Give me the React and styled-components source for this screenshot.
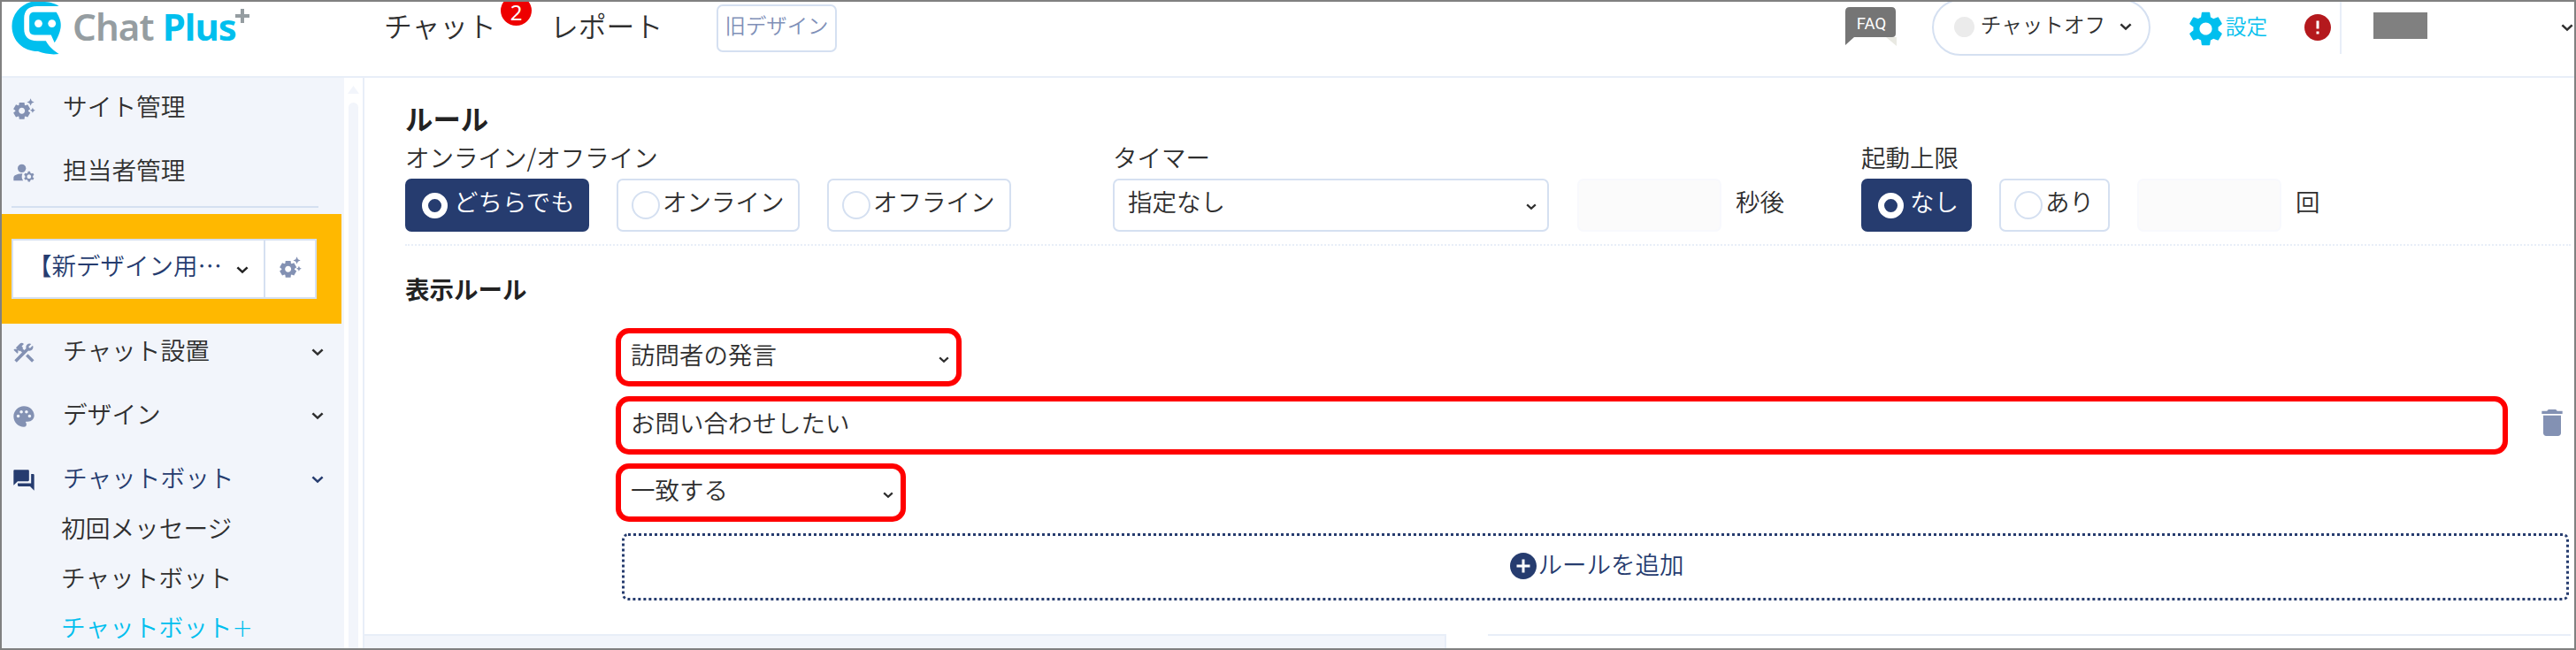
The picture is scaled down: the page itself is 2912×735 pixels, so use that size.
import React from "react";
import styled, { createGlobalStyle, css } from "styled-components";
import {
  MdSettingsSuggest,
  MdManageAccounts,
  MdConstruction,
  MdPalette,
  MdForum,
  MdDelete,
  MdSettings,
  MdAddCircle,
  MdError,
} from "react-icons/md";

const c = {
  navy: "#263c6f",
  ink: "#2f2f2f",
  line: "#e8eef8",
  edge: "#d5e0f1",
  panel: "#f2f5fb",
  muted: "#8391b3",
  cyan: "#00bfee",
  red: "#ff0000",
};

const Global = createGlobalStyle`
  * { box-sizing: border-box; }
  body {
    margin: 0;
    background: #fff;
    color: ${c.ink};
    font-family: "Noto Sans CJK JP", sans-serif;
    font-weight: 350;
    font-size: 27.5px;
    line-height: 1;
  }
  svg { display: block; flex: none; }
`;

const Frame = styled.div`
  width: 2912px;
  height: 735px;
  border: 2px solid #808080;
  overflow: hidden;
  display: flex;
  flex-direction: column;
`;

/* ---------- header ---------- */

const Header = styled.header`
  height: 86px;
  flex: none;
  border-bottom: 2px solid ${c.line};
  display: flex;
  align-items: flex-start;
  padding-left: 11px;
`;

const Brand = styled.div`
  display: flex;
  width: 421px;
`;

const BrandName = styled.div`
  font-family: "Noto Sans", "Open Sans", sans-serif;
  font-weight: 600;
  font-size: 42px;
  line-height: 56px;
  margin-left: 12px;
  color: #959da1;
  white-space: pre;
  letter-spacing: -0.9px;
  b { color: ${c.cyan}; font-weight: 700; }
`;

const BrandPlus = styled.svg`
  margin: 8px 0 0 -1px;
`;

const TopLink = styled.a`
  position: relative;
  font-size: 31.8px;
  line-height: 52px;
  width: ${(p) => p.$w}px;
`;

const Badge = styled.span`
  position: absolute;
  left: 132px;
  top: 0;
  width: 35px;
  height: 24px;
  color: #fff;
  font: 400 24px/23px "Noto Sans", sans-serif;
  text-align: center;
  z-index: 0;
  &::before {
    content: "";
    position: absolute;
    z-index: -1;
    left: 0;
    top: -7px;
    width: 35px;
    height: 34px;
    border-radius: 50%;
    background: #ee0000;
  }
`;

const OldDesign = styled.button`
  width: 136px;
  height: 54px;
  margin: 3px 0 0;
  padding: 0 0 6px;
  border: 2px solid ${c.edge};
  border-radius: 7px;
  background: #fff;
  color: #8090b8;
  font: inherit;
  font-size: 23.4px;
`;

const HeaderRight = styled.div`
  margin-left: auto;
  display: flex;
  align-items: flex-start;
`;

const Faq = styled.svg`
  margin: 6px 40px 0 0;
`;

const StatusPill = styled.div`
  width: 247px;
  height: 64px;
  margin: -3px 39px 0 0;
  border: 2px solid ${c.edge};
  border-radius: 32px;
  display: flex;
  align-items: center;
  padding: 0 19px 2px 23px;
  font-size: 23.6px;
  i {
    width: 23px;
    height: 23px;
    border-radius: 50%;
    background: #ebebeb;
    margin-right: 7px;
  }
  span { margin-top: -4px; }
  svg { margin-left: auto; }
`;

const SettingsLink = styled.a`
  display: flex;
  align-items: center;
  height: 60px;
  color: ${c.cyan};
  font-size: 23.6px;
  span { margin: -4px 0 0 -1px; }
`;

const Alert = styled.div`
  height: 59px;
  padding: 11px 7px 0 39px;
  border-right: 2px solid ${c.line};
  color: #b4191d;
`;

const Masked = styled.div`
  width: 61px;
  height: 30px;
  margin: 12px 151px 0 36px;
  background: #808080;
`;

const AccountChevron = styled.div`
  padding: 25px 1px 0 0;
`;

/* ---------- body ---------- */

const Body = styled.div`
  flex: 1;
  min-height: 0;
  display: flex;
`;

const Sidebar = styled.nav`
  width: 387px;
  background: ${c.panel};
  flex: none;
  display: flex;
  flex-direction: column;
  overflow: hidden;
  > * { flex: none; }
`;

const NavItem = styled.a`
  display: flex;
  align-items: center;
  height: ${(p) => p.$h}px;
  margin-bottom: ${(p) => p.$gap}px;
  padding: 0 23px 3px 11px;
  font-size: 27.7px;
  color: ${(p) => (p.$active ? c.navy : c.ink)};
  > svg { margin-top: 6px; }
  > svg:first-child {
    margin-right: 30px;
    color: ${(p) => (p.$active ? c.navy : c.muted)};
  }
  > svg + svg { margin-left: auto; }
`;

const SubItem = styled.a`
  height: 56px;
  line-height: 51px;
  padding-left: 67px;
  font-size: 27.7px;
  color: ${(p) => (p.$current ? c.cyan : c.ink)};
  span { font-family: "DejaVu Sans", sans-serif; font-weight: 200; }
`;

const Divider = styled.div`
  height: 2px;
  margin: 1px 29px 7px 11px;
  background: ${c.edge};
`;

const SiteBand = styled.div`
  width: 384px;
  height: 124px;
  background: #ffb800;
  padding: 28px 0 0 11px;
  margin-bottom: 1px;
`;

const SitePicker = styled.div`
  width: 345px;
  height: 68px;
  border: 2px solid ${c.edge};
  background: #fff;
  display: flex;
`;

const SiteName = styled.div`
  width: 285px;
  border-right: 2px solid ${c.edge};
  display: flex;
  align-items: center;
  padding: 0 17px 0 16px;
  color: ${c.navy};
  span { margin-top: -9px; white-space: nowrap; }
  svg { margin-left: auto; color: #222; margin-top: 2px; }
`;

const SiteGear = styled.div`
  flex: 1;
  display: grid;
  place-items: center;
  padding-bottom: 5px;
  color: ${c.muted};
`;

const ScrollRail = styled.div`
  width: 23px;
  flex: none;
  border-right: 2px solid ${c.line};
  display: flex;
  flex-direction: column;
  padding: 9px 5px 0 4px;
  background: #fff;
  svg { margin-bottom: 10px; }
`;

const ScrollThumb = styled.div`
  width: 11px;
  margin-left: 1px;
  flex: 1;
  border-radius: 6px 6px 0 0;
  background: ${c.panel};
`;

const Main = styled.main`
  flex: 1;
  min-width: 0;
  display: flex;
  flex-direction: column;
  padding-top: 28px;
`;

const Title = styled.h1`
  margin: 0 0 0 46px;
  font-size: 31.4px;
  line-height: 36px;
  font-weight: 700;
  color: #222;
`;

const Settings = styled.section`
  display: flex;
  margin: 0 4px 0 46px;
  padding-top: 7px;
  height: 126px;
  border-bottom: 2px dotted ${c.line};
`;

const Field = styled.div`
  width: ${(p) => p.$w}px;
  flex: none;
`;

const FieldLabel = styled.div`
  height: 43px;
  line-height: 37px;
  white-space: nowrap;
`;

const Controls = styled.div`
  display: flex;
  align-items: center;
`;

const RadioButton = styled.label`
  width: ${(p) => p.$w}px;
  height: 60px;
  margin-right: 31px;
  border: 2px solid ${c.edge};
  border-radius: 7px;
  display: flex;
  align-items: center;
  padding-left: 15px;
  white-space: nowrap;
  span { margin: -8px 0 0 3px; }
  ${(p) =>
    p.$on &&
    css`
      background: ${c.navy};
      border-color: ${c.navy};
      color: #fff;
      padding-left: 17px;
      span { margin-left: 7px; }
    `}
`;

const RadioMark = styled.i`
  width: 32px;
  height: 32px;
  border-radius: 50%;
  border: 2px solid ${c.edge};
  ${(p) =>
    p.$on &&
    css`
      width: 29px;
      height: 29px;
      border: 7px solid #fff;
    `}
`;

const selectLook = css`
  display: flex;
  align-items: center;
  justify-content: space-between;
  span { margin-top: -7px; }
`;

const Select = styled.div`
  ${selectLook}
  width: 493px;
  height: 60px;
  margin-right: 32px;
  border: 2px solid ${c.edge};
  border-radius: 7px;
  padding: 0 12px 0 15px;
  span { margin-top: -8px; }
  svg { margin-top: 3px; }
`;

const DisabledInput = styled.div`
  width: 163px;
  height: 60px;
  margin-right: 16px;
  border: 2px solid #f8f9fd;
  border-radius: 7px;
  background: #fbfbfb;
`;

const Unit = styled.span`
  margin-top: -8px;
`;

const SubTitle = styled.h2`
  margin: 30px 0 27px 46px;
  font-size: 27.5px;
  line-height: 36px;
  font-weight: 700;
  color: #222;
`;

const Rules = styled.section`
  display: flex;
  flex-direction: column;
  padding-left: 284px;
`;

const RuleRow = styled.div`
  display: flex;
  align-items: center;
  margin-bottom: ${(p) => p.$gap}px;
  > svg { margin: -7px 0 0 30px; color: ${c.muted}; }
`;

const RuleField = styled.div`
  ${selectLook}
  width: ${(p) => p.$w}px;
  height: 66px;
  border: 6px solid ${c.red};
  border-radius: 15px;
  padding: 0 8px 0 11px;
  svg { margin-top: 5px; }
`;

const AddRule = styled.button`
  width: 2201px;
  height: 76px;
  margin-left: 7px;
  border: 3px dotted ${c.navy};
  border-radius: 7px;
  background: #fff;
  color: ${c.navy};
  font: inherit;
  display: flex;
  align-items: center;
  justify-content: center;
  padding: 0 0 2px 0;
  span { margin: -5px 0 0 -1px; }
`;

const BottomPanels = styled.div`
  flex: 1;
  margin: 38px 4px 0 0;
  display: flex;
  justify-content: space-between;
`;

const LeftPanel = styled.div`
  width: 1223px;
  background: ${c.panel};
  border: solid ${c.line};
  border-width: 2px 2px 0 0;
`;

const RightPanel = styled.div`
  width: 1224px;
  border-top: 2px solid ${c.line};
`;

function Chevron({ w = 14, h = 9 }) {
  return (
    <svg width={w} height={h} viewBox="0 0 14 9" fill="none">
      <path d="M1.4 1.4 L7 6.6 L12.6 1.4" stroke="currentColor" strokeWidth="2.6" />
    </svg>
  );
}

function LogoMark() {
  return (
    <svg width="57" height="61" viewBox="0 0 57 62">
      <path
        d="M54 5 C48 1 42 0 35 0 H22 C9 4 0 15 0 28 C0 45 13 57 30 57 C38 60 46 61 54 60 C48 56 43 52 39 45 H29 C19 45 14 40 14 31 V19 C14 10 19 5 29 5 Z"
        fill={c.cyan}
      />
      <path
        d="M26 12 H51 C55 18 57 24 56 30 C55 36 53 41 49 47 L45 38 H26 C22 38 20 36 20 32 V18 C20 14 22 12 26 12 Z"
        fill={c.cyan}
      />
      <circle cx="30.5" cy="25" r="4.5" fill="#fff" />
      <circle cx="46" cy="25" r="4.5" fill="#fff" />
    </svg>
  );
}

function Radio({ w, on, children }) {
  return (
    <RadioButton $w={w} $on={on}>
      <RadioMark $on={on} />
      <span>{children}</span>
    </RadioButton>
  );
}

export default function App() {
  return (
    <Frame lang="ja">
      <Global />
      <Header>
        <Brand>
          <LogoMark />
          <BrandName>
            Chat <b>Plus</b>
          </BrandName>
          <BrandPlus width="16" height="16" viewBox="0 0 16 16">
            <path d="M8 0 V16 M0 8 H16" stroke="#959da1" strokeWidth="4" />
          </BrandPlus>
        </Brand>
        <TopLink $w={188}>
          チャット<Badge>2</Badge>
        </TopLink>
        <TopLink $w={188}>レポート</TopLink>
        <OldDesign>旧デザイン</OldDesign>
        <HeaderRight>
          <Faq width="58" height="44" viewBox="0 0 58 44">
            <path d="M46 34 H58 V44 Z" fill="#e9e9e2" />
            <path d="M5 0 H52 Q57 0 57 5 V30 Q57 34 53 34 H10 L0 43 V5 Q0 0 5 0 Z" fill="#757575" />
            <text x="29.5" y="25" textAnchor="middle" fontFamily="Roboto, sans-serif" fontSize="18.5" fontWeight="400" fill="#fff">
              FAQ
            </text>
          </Faq>
          <StatusPill>
            <i />
            <span>チャットオフ</span>
            <Chevron />
          </StatusPill>
          <SettingsLink>
            <MdSettings size={47} />
            <span>設定</span>
          </SettingsLink>
          <Alert>
            <MdError size={36} />
          </Alert>
          <Masked />
          <AccountChevron>
            <Chevron />
          </AccountChevron>
        </HeaderRight>
      </Header>
      <Body>
        <Sidebar>
          <NavItem $h={67} $gap={5}>
            <MdSettingsSuggest size={28} />
            サイト管理
          </NavItem>
          <NavItem $h={67} $gap={5}>
            <MdManageAccounts size={28} />
            担当者管理
          </NavItem>
          <Divider />
          <SiteBand>
            <SitePicker>
              <SiteName>
                <span>【新デザイン用…</span>
                <Chevron />
              </SiteName>
              <SiteGear>
                <MdSettingsSuggest size={28} />
              </SiteGear>
            </SitePicker>
          </SiteBand>
          <NavItem $h={60} $gap={12}>
            <MdConstruction size={28} />
            チャット設置
            <Chevron />
          </NavItem>
          <NavItem $h={60} $gap={12}>
            <MdPalette size={28} />
            デザイン
            <Chevron />
          </NavItem>
          <NavItem $h={60} $gap={0} $active>
            <MdForum size={28} />
            チャットボット
            <Chevron />
          </NavItem>
          <SubItem>初回メッセージ</SubItem>
          <SubItem>チャットボット</SubItem>
          <SubItem $current>
            チャットボット<span>+</span>
          </SubItem>
        </Sidebar>
        <ScrollRail>
          <svg width="13" height="9" viewBox="0 0 13 9">
            <path d="M6.5 0 L13 9 H0 Z" fill={c.panel} />
          </svg>
          <ScrollThumb />
        </ScrollRail>
        <Main>
          <Title>ルール</Title>
          <Settings>
            <Field $w={800}>
              <FieldLabel>オンライン/オフライン</FieldLabel>
              <Controls>
                <Radio w={208} on>
                  どちらでも
                </Radio>
                <Radio w={207}>オンライン</Radio>
                <Radio w={208}>オフライン</Radio>
              </Controls>
            </Field>
            <Field $w={846}>
              <FieldLabel>タイマー</FieldLabel>
              <Controls>
                <Select>
                  <span>指定なし</span>
                  <Chevron w={12} h={8} />
                </Select>
                <DisabledInput />
                <Unit>秒後</Unit>
              </Controls>
            </Field>
            <Field $w={600}>
              <FieldLabel>起動上限</FieldLabel>
              <Controls>
                <Radio w={125} on>
                  なし
                </Radio>
                <Radio w={125}>あり</Radio>
                <DisabledInput />
                <Unit>回</Unit>
              </Controls>
            </Field>
          </Settings>
          <SubTitle>表示ルール</SubTitle>
          <Rules>
            <RuleRow $gap={11}>
              <RuleField $w={391}>
                <span>訪問者の発言</span>
                <Chevron w={12} h={8} />
              </RuleField>
            </RuleRow>
            <RuleRow $gap={10}>
              <RuleField $w={2139}>
                <span>お問い合わせしたい</span>
              </RuleField>
              <MdDelete size={40} />
            </RuleRow>
            <RuleRow $gap={13}>
              <RuleField $w={328}>
                <span>一致する</span>
                <Chevron w={12} h={8} />
              </RuleField>
            </RuleRow>
            <AddRule>
              <MdAddCircle size={36} />
              <span>ルールを追加</span>
            </AddRule>
          </Rules>
          <BottomPanels>
            <LeftPanel />
            <RightPanel />
          </BottomPanels>
        </Main>
      </Body>
    </Frame>
  );
}
